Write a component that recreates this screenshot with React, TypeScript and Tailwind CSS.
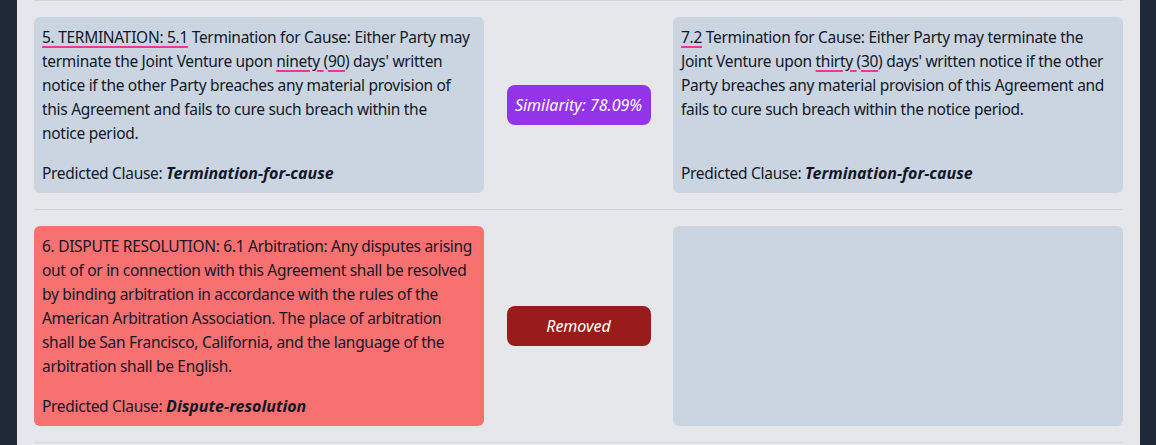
import type React from "react"

const mark = "underline decoration-pink-500 decoration-2 underline-offset-[3px]"
const card = "rounded-md p-2 flex flex-col justify-between text-[15.5px] tracking-[-0.3px]"

function Badge({ label, tone }: { label: string; tone: "purple" | "red" }): React.JSX.Element {
  const color = tone === "purple" ? "bg-[#9333ea]" : "bg-[#991b1b]"
  return (
    <div className={`${color} w-36 h-10 rounded-lg flex items-center justify-center text-white italic text-base`}>
      {label}
    </div>
  )
}

function Predicted({ name }: { name: string }): React.JSX.Element {
  return (
    <p>
      Predicted Clause: <b className="italic font-bold text-base tracking-normal">{name}</b>
    </p>
  )
}

export default function App(): React.JSX.Element {
  return (
    <div
      className="flex min-h-screen text-base leading-6 text-[#111827]"
      style={{ fontFamily: '"Segoe UI", "Noto Sans", sans-serif' }}
    >
      <aside className="w-[17px] bg-[#1f2937]" />
      <main className="flex-1 bg-[#e5e7eb] px-[17px]">
        <section className="border-t border-[#d1d5db] py-4 grid grid-cols-[1fr_189px_1fr]">
          <div className={`${card} bg-[#cbd5e1]`}>
            <p className="mb-4">
              <span className={mark}>5. TERMINATION: 5.1</span> Termination for Cause: Either Party may
              terminate the Joint Venture upon <span className={mark}>ninety</span>
              <span className={mark}> </span>(<span className={mark}>90</span>) days' written notice if
              the other Party breaches any material provision of this Agreement and fails to cure such
              breach within the
              <br />
              notice period.
            </p>
            <Predicted name="Termination-for-cause" />
          </div>
          <div className="flex items-center justify-center">
            <Badge label="Similarity: 78.09%" tone="purple" />
          </div>
          <div className={`${card} bg-[#cbd5e1]`}>
            <p className="mb-4">
              <span className={mark}>7.2</span> Termination for Cause: Either Party may terminate the
              Joint Venture upon <span className={mark}>thirty</span>
              <span className={mark}> </span>(<span className={mark}>30</span>) days' written notice if
              the other Party breaches any material provision of this Agreement and fails to cure such
              breach within the notice period.
            </p>
            <Predicted name="Termination-for-cause" />
          </div>
        </section>
        <section className="border-t border-[#d1d5db] py-4 grid grid-cols-[1fr_189px_1fr]">
          <div className={`${card} bg-[#f87171]`}>
            <p className="mb-4">
              6. DISPUTE RESOLUTION: 6.1 Arbitration: Any disputes arising out of or in connection with
              this Agreement shall be resolved by binding arbitration in accordance with the rules of the
              American Arbitration Association. The place of arbitration shall be San Francisco,
              California, and the language of the arbitration shall be English.
            </p>
            <Predicted name="Dispute-resolution" />
          </div>
          <div className="flex items-center justify-center">
            <Badge label="Removed" tone="red" />
          </div>
          <div className="bg-[#cbd5e1] rounded-md" />
        </section>
        <div className="border-t border-[#d1d5db] h-4" />
      </main>
      <aside className="w-[16px] bg-[#1f2937]" />
    </div>
  )
}
